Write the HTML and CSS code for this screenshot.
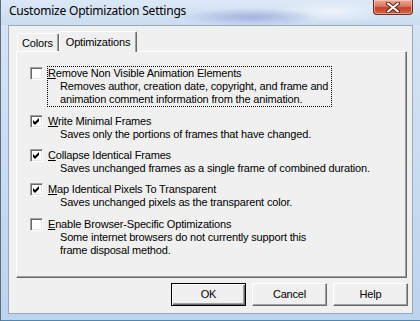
FILE: index.html
```html
<!DOCTYPE html>
<html>
<head>
<meta charset="utf-8">
<title>Customize Optimization Settings</title>
<link rel="stylesheet" href="styles.css">
</head>
<body>
<div class="window">
  <div class="titlebar">
    <span class="title">Customize Optimization Settings</span>
    <div class="close">
      <svg width="14" height="11" viewBox="0 0 14 11">
        <path d="M2 1.5 L12 9.5 M12 1.5 L2 9.5" stroke="#5b2418" stroke-width="4" stroke-linecap="round" fill="none"/>
        <path d="M2 1.5 L12 9.5 M12 1.5 L2 9.5" stroke="#ffffff" stroke-width="2" stroke-linecap="round" fill="none"/>
      </svg>
    </div>
  </div>
  <div class="client">
    <div class="tabs">
      <div class="tab">Colors</div>
      <div class="tab selected">Optimizations</div>
    </div>
    <div class="panel">
      <div class="row">
        <span class="check"></span>
        <div class="label focus">
          <div><u>R</u>emove Non Visible Animation Elements</div>
          <div class="desc">Removes author, creation date, copyright, and frame and<br>animation comment information from the animation.</div>
        </div>
      </div>
      <div class="row second">
        <span class="check on"><svg width="9" height="9" viewBox="0 0 9 9"><polygon points="1,3 3,5 7,1 7,4 3,8 1,6" fill="#000"/></svg></span>
        <div class="label">
          <div><u>W</u>rite Minimal Frames</div>
          <div class="desc">Saves only the portions of frames that have changed.</div>
        </div>
      </div>
      <div class="row">
        <span class="check on"><svg width="9" height="9" viewBox="0 0 9 9"><polygon points="1,3 3,5 7,1 7,4 3,8 1,6" fill="#000"/></svg></span>
        <div class="label">
          <div><u>C</u>ollapse Identical Frames</div>
          <div class="desc">Saves unchanged frames as a single frame of combined duration.</div>
        </div>
      </div>
      <div class="row">
        <span class="check on"><svg width="9" height="9" viewBox="0 0 9 9"><polygon points="1,3 3,5 7,1 7,4 3,8 1,6" fill="#000"/></svg></span>
        <div class="label">
          <div><u>M</u>ap Identical Pixels To Transparent</div>
          <div class="desc">Saves unchanged pixels as the transparent color.</div>
        </div>
      </div>
      <div class="row last">
        <span class="check"></span>
        <div class="label">
          <div><u>E</u>nable Browser-Specific Optimizations</div>
          <div class="desc">Some internet browsers do not currently support this<br>frame disposal method.</div>
        </div>
      </div>
    </div>
    <div class="buttons">
      <div class="btn default">OK</div>
      <div class="btn">Cancel</div>
      <div class="btn">Help</div>
    </div>
  </div>
</div>
</body>
</html>
```
FILE: styles.css
```css
html, body {
  margin: 0;
  padding: 0;
}
body {
  width: 420px;
  height: 321px;
  overflow: hidden;
  font-family: "Liberation Sans", Arial, sans-serif;
  font-size: 11px;
  letter-spacing: -0.17px;
  color: #000;
}
.window {
  width: 420px;
  height: 321px;
  box-sizing: border-box;
  display: flex;
  flex-direction: column;
  background: linear-gradient(to bottom, #d6e5f5 0%, #c7dbf0 60%, #bcd4ee 100%);
  border-left: 1px solid #5d6d80;
  border-bottom: 1px solid #4f86b0;
  padding: 0 7px 6px 7px;
}
.titlebar {
  height: 25px;
  flex: none;
  display: flex;
  align-items: flex-start;
  margin: 0 -7px 0 -7px;
  padding-left: 8px;
  background:
    radial-gradient(ellipse 70px 9px at 250px 17px, rgba(130,140,210,0.55), rgba(130,140,210,0) 100%),
    radial-gradient(ellipse 60px 12px at 330px 12px, rgba(255,255,255,0.6), rgba(255,255,255,0) 100%),
    linear-gradient(to bottom, #dbe8f6, #cadcf0);
}
.title {
  font-family: "Noto Sans", "Open Sans", sans-serif;
  font-size: 12px;
  line-height: 16px;
  padding-top: 3px;
  color: #000;
  letter-spacing: -0.22px;
}
.close {
  margin-left: auto;
  margin-right: 7px;
  width: 40px;
  height: 15px;
  box-sizing: border-box;
  border: 1px solid #6e2c20;
  border-top: none;
  border-radius: 0 0 4px 4px;
  background: linear-gradient(to bottom, #e9a999 0%, #d9775f 45%, #c44128 55%, #d3664b 100%);
  display: flex;
  align-items: center;
  justify-content: center;
  box-shadow: inset 0 0 0 1px rgba(255,220,210,0.5);
}
.close svg { display: block; }
.client {
  flex: 1;
  display: flex;
  flex-direction: column;
  background: #f0f0f0;
  border: 1px solid #97a9be;
  padding: 5px 5px 7px 7px;
}
.tabs {
  height: 20px;
  flex: none;
  display: flex;
  align-items: flex-end;
  padding-left: 1px;
}
.tab {
  height: 18px;
  box-sizing: border-box;
  padding: 3px 5px 0 4px;
  line-height: 13px;
  border-top: 1px solid #fff;
  border-left: 1px solid #fff;
  border-right: 1px solid #696969;
  box-shadow: inset -1px 0 0 #a0a0a0;
  border-radius: 2px 2px 0 0;
  background: #f0f0f0;
}
.tab.selected {
  height: 21px;
  margin-bottom: -1px;
  padding: 4px 6px 0 6px;
  position: relative;
  z-index: 1;
}
.panel {
  flex: 1;
  display: flex;
  flex-direction: column;
  gap: 6px;
  border-top: 1px solid #fff;
  border-left: 1px solid #fff;
  border-right: 1px solid #696969;
  border-bottom: 1px solid #696969;
  box-shadow: inset -1px -1px 0 #a0a0a0;
  padding: 14px 0 0 13px;
}
.row {
  display: flex;
  align-items: flex-start;
  gap: 4px;
  line-height: 13px;
}
.row.second,
.row.last {
  margin-top: 1px;
}
.check {
  width: 13px;
  height: 13px;
  box-sizing: border-box;
  margin-top: 1px;
  flex: none;
  background: #fff;
  border-top: 1px solid #a0a0a0;
  border-left: 1px solid #a0a0a0;
  border-right: 1px solid #fff;
  border-bottom: 1px solid #fff;
  box-shadow: inset 1px 1px 0 #696969, inset -1px -1px 0 #e3e3e3;
  display: flex;
  align-items: center;
  justify-content: center;
}
.check svg { display: block; }
.label {
  border: 1px dotted transparent;
  padding-right: 3px;
}
.label.focus {
  border-color: #000;
}
.label u {
  text-decoration: underline;
  text-underline-offset: 1px;
}
.desc {
  padding-left: 12px;
}
.buttons {
  flex: none;
  display: flex;
  justify-content: flex-end;
  gap: 6px;
  margin-top: 5px;
  margin-right: -1px;
}
.btn {
  width: 75px;
  height: 23px;
  box-sizing: border-box;
  display: flex;
  align-items: center;
  justify-content: center;
  background: #f0f0f0;
  border-top: 1px solid #fff;
  border-left: 1px solid #fff;
  border-right: 1px solid #696969;
  border-bottom: 1px solid #696969;
  box-shadow: inset -1px -1px 0 #a0a0a0;
  line-height: 13px;
}
.btn.default {
  border: 1px solid #000;
  box-shadow: inset 1px 1px 0 #fff, inset -1px -1px 0 #696969, inset -2px -2px 0 #a0a0a0;
}
```
